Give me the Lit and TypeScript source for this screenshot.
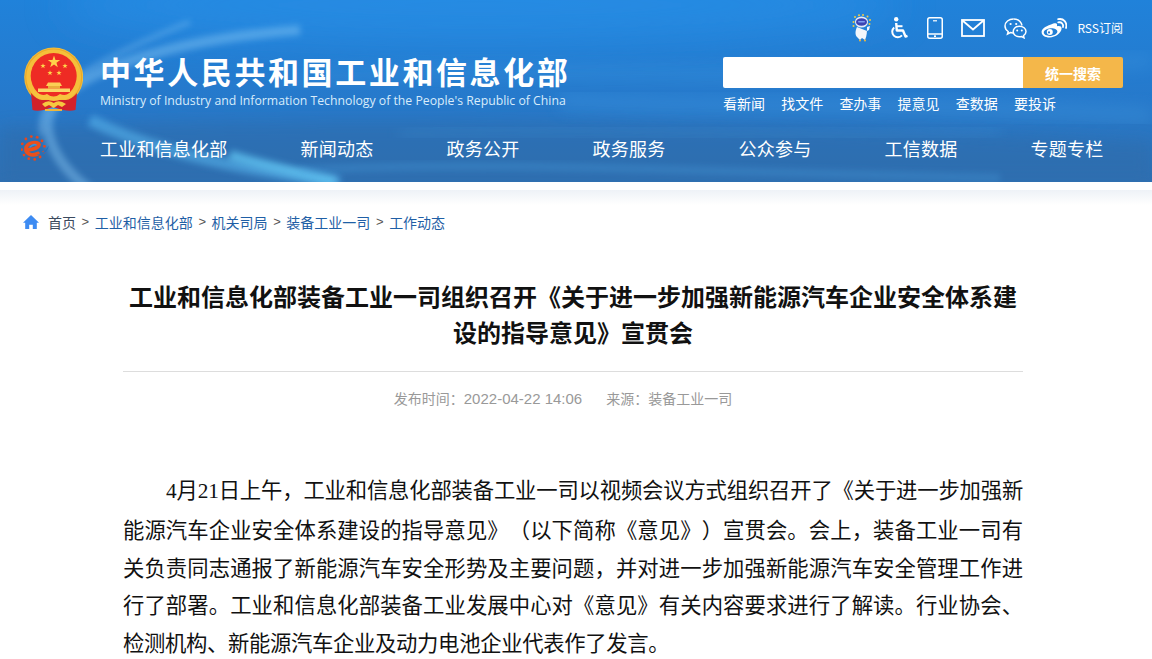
import { LitElement, html, css, svg } from "lit";
import { customElement } from "lit/decorators.js";

const NAV = ["工业和信息化部", "新闻动态", "政务公开", "政务服务", "公众参与", "工信数据", "专题专栏"];
const QUICK = ["看新闻", "找文件", "查办事", "提意见", "查数据", "要投诉"];
const CRUMBS = ["工业和信息化部", "机关司局", "装备工业一司", "工作动态"];

const star = (cx: number, cy: number, r: number) => {
  const pts: string[] = [];
  for (let i = 0; i < 10; i++) {
    const rad = i % 2 === 0 ? r : r * 0.4;
    const a = -Math.PI / 2 + (i * Math.PI) / 5;
    pts.push(`${(cx + rad * Math.cos(a)).toFixed(2)},${(cy + rad * Math.sin(a)).toFixed(2)}`);
  }
  return svg`<polygon points=${pts.join(" ")} fill="#ffd34a" />`;
};

const emblem = html`<svg class="emblem" viewBox="0 0 60 64" aria-hidden="true">
  <circle cx="30.7" cy="30" r="29.5" fill="#f5bf3a" />
  <circle cx="30.7" cy="30" r="28" fill="none" stroke="#eaa92b" stroke-width="1.2" />
  <circle cx="30.7" cy="29" r="23" fill="#ee2b24" />
  ${star(31, 15, 6.5)} ${star(20, 19, 2.8)} ${star(42, 19, 2.8)} ${star(27, 26, 2.8)} ${star(36, 26, 2.8)}
  <path d="M23 39 L25 35.5 L37 35.5 L39 39 Z" fill="#fbcf55" />
  <rect x="25" y="39" width="12" height="2.5" fill="#e9ad3a" />
  <rect x="15" y="41.5" width="32" height="3.5" fill="#fbd566" />
  <path d="M8 46 L9.5 63 Q14 64.5 21 63 L30 60 L40 63 Q47 64.5 52.5 63 L54 46 Q48 53 43 53 L19 53 Q14 53 8 46 Z" fill="#d3212b" />
  <path d="M10 43 Q18 50 24 47 Q30.7 52 37 47 Q44 50 52 43 L52 46 Q44 54 39 52 Q30.7 56 23 52 Q16 54 10 46 Z" fill="#f7c33f" />
  <path d="M19 57 Q25 52 30.7 56 Q36 52 43 57 L39 60 L35 58 L30.7 61 L26 58 L22 60 Z" fill="#f7c840" />
  <path d="M22 62 L39 62 L39 64 L22 64 Z" fill="#efb73c" />
</svg>`;

const navLogo = html`<svg class="navlogo" viewBox="0 0 28 26" fill="none" aria-hidden="true">
  <g fill="#e8471c">
    ${[0, 1, 2, 3, 4, 5, 6, 7, 8, 9, 10, 11].map((i) => {
      const a = (i * Math.PI) / 6 + 0.9;
      return svg`<circle cx=${(12 + 11.5 * Math.cos(a)).toFixed(1)} cy=${(13 + 11.5 * Math.sin(a)).toFixed(1)} r="1.4" />`;
    })}
  </g>
  <path d="M7 14.5 C12 15 18 12.5 18 9.5 C17 6.5 6 6.5 5 13.5 C4.5 19 11 21.5 17 18.5" stroke="#ea501c" stroke-width="3.8" stroke-linecap="round" />
  <path d="M9 12 C11 10 14 9 15 10" stroke="#3f90d4" stroke-width="1.6" stroke-linecap="round" />
  <path d="M15.5 19.5 C21 19 25.5 15 27.5 10.5 C27.8 15.5 22 21 15.5 19.5 Z" fill="#1f72c4" />
</svg>`;

const robot = html`<svg class="ic" width="20" height="28" viewBox="0 0 20 28" aria-hidden="true">
  <g fill="#f1c945"><circle cx="3" cy="3" r="1" /><circle cx="7" cy="1.2" r="1" /><circle cx="11" cy="1" r="1" /><circle cx="15.5" cy="2.5" r="1" /><circle cx="1.5" cy="8" r="1" /><circle cx="18" cy="6" r="1" /><circle cx="17.5" cy="10" r="1" /><circle cx="1.5" cy="12" r="1" /></g>
  <path d="M5 13 C3 17 3 21 5 23 L8 26 L10 24 L13 26 C15 22 15 17 15 13 L18 12 L17 16 L15 17 Z" fill="#f2f6fb" />
  <ellipse cx="9.5" cy="8" rx="6.5" ry="5.5" fill="#e8eef8" />
  <ellipse cx="9.5" cy="8" rx="5.5" ry="3.8" fill="#3b45b5" />
  <rect x="6" y="7" width="7" height="1.6" rx=".8" fill="#7d9cf0" />
  <circle cx="8" cy="26.6" r="1" fill="#efb73a" /><circle cx="13" cy="26.6" r="1" fill="#efb73a" />
</svg>`;

const wheelchair = html`<svg class="ic" width="18" height="23" viewBox="0 0 18 23" fill="none" aria-hidden="true">
  <circle cx="6.2" cy="2.2" r="2.2" fill="#fff" />
  <path d="M6.2 6 L6.8 13.5 L13 13.5 L15.5 19.5 L17.5 18.8" stroke="#fff" stroke-width="2.4" stroke-linejoin="round" />
  <path d="M6.8 9.2 L12.5 9.2" stroke="#fff" stroke-width="2" />
  <path d="M4.2 10.4 A5.6 5.6 0 1 0 12 18.4" stroke="#fff" stroke-width="2" />
</svg>`;

const phone = html`<svg class="ic" width="16" height="22" viewBox="0 0 16 22" fill="none" aria-hidden="true">
  <rect x=".75" y=".75" width="14.5" height="20.5" rx="2" stroke="#fff" stroke-width="1.5" />
  <path d="M1 17 H15" stroke="#fff" stroke-width="1.5" />
  <rect x="6" y="3.2" width="4" height="1.2" fill="#fff" />
  <rect x="7" y="18.4" width="2" height="1.6" fill="#fff" />
</svg>`;

const mail = html`<svg class="ic" width="24" height="18" viewBox="0 0 24 18" fill="none" aria-hidden="true">
  <rect x="1" y="1" width="22" height="16" stroke="#fff" stroke-width="1.8" />
  <path d="M1.5 1.5 L12 10.5 L22.5 1.5" stroke="#fff" stroke-width="1.8" />
</svg>`;

const wechat = html`<svg class="ic" width="23" height="21" viewBox="0 0 23 21" fill="none" aria-hidden="true">
  <path d="M9.5 1 C4.8 1 1 4.1 1 8 C1 10.3 2.3 12.2 4.2 13.5 L3.5 16 L6.4 14.5 C7.3 14.8 8.2 14.9 9 14.9" stroke="#fff" stroke-width="1.5" />
  <path d="M18 7.5 C17 3.6 13.6 1 9.5 1" stroke="#fff" stroke-width="1.5" />
  <circle cx="6.6" cy="6" r="1.1" fill="#fff" /><circle cx="12.2" cy="6" r="1.1" fill="#fff" />
  <path d="M15.5 8.2 C11.9 8.2 9.2 10.6 9.2 13.5 C9.2 16.4 11.9 18.8 15.5 18.8 C16.2 18.8 16.9 18.7 17.6 18.5 L20 19.8 L19.5 17.6 C21 16.6 22 15.1 22 13.5 C22 10.6 19.1 8.2 15.5 8.2 Z" stroke="#fff" stroke-width="1.5" />
  <circle cx="13.2" cy="12.6" r="1" fill="#fff" /><circle cx="17.8" cy="12.6" r="1" fill="#fff" />
</svg>`;

const weibo = html`<svg class="ic" width="26" height="21" viewBox="0 0 26 21" fill="none" aria-hidden="true">
  <path fill-rule="evenodd" clip-rule="evenodd" d="M10 6.5 C13 4.8 15.5 4.7 16 6.2 C16.3 7.2 15.8 8 16 8.3 C18.5 7.6 20.6 8.3 20.6 10.3 C20.6 14.6 14.8 19.5 8.5 19.5 C4 19.5 .6 17.4 .6 14 C.6 11.6 3.6 8.4 10 6.5 Z M9.7 10.2 C5.8 10.4 2.8 12.4 2.8 14.6 C2.8 16.7 5.8 18.1 9.5 17.9 C13.3 17.7 16.4 15.8 16.4 13.6 C16.4 11.5 13.4 10 9.7 10.2 Z" fill="#fff" />
  <circle cx="8.8" cy="14" r="3" fill="#fff" /><circle cx="8" cy="14.4" r="1.1" fill="#2a7bd0" />
  <path d="M17.2 4.4 C20.5 3.6 22.7 6 22 9" stroke="#fff" stroke-width="1.8" stroke-linecap="round" />
  <path d="M17.2 1.2 C22.5 0 26.6 4.5 25 10" stroke="#fff" stroke-width="1.8" stroke-linecap="round" />
</svg>`;

const home = html`<svg class="home" viewBox="0 0 16 14" aria-hidden="true">
  <path d="M8 0 L16 7.8 L13.8 7.8 L13.8 14 L9.8 14 L9.8 9.8 L6.2 9.8 L6.2 14 L2.2 14 L2.2 7.8 L0 7.8 Z" fill="#3d8bf2" />
</svg>`;

const headerArt = html`<svg class="art" viewBox="0 0 1152 182" preserveAspectRatio="none" aria-hidden="true">
  <defs>
    <filter id="b8" x="-20%" y="-50%" width="140%" height="200%"><feGaussianBlur stdDeviation="8" /></filter>
    <filter id="b3" x="-20%" y="-50%" width="140%" height="200%"><feGaussianBlur stdDeviation="3" /></filter>
    <filter id="b20" x="-20%" y="-80%" width="140%" height="260%"><feGaussianBlur stdDeviation="20" /></filter>
  </defs>
  <ellipse cx="480" cy="5" rx="420" ry="38" fill="#2a93ea" opacity=".55" filter="url(#b20)" />
  <path d="M0 182 V128 C300 118 700 120 1152 142 V182 Z" fill="#2f6cab" opacity=".55" filter="url(#b8)" />
  <path d="M300 30 C160 40 40 80 48 130 C52 155 70 175 90 190" fill="none" stroke="#8fcdf7" stroke-width="10" opacity=".42" filter="url(#b3)" />
  <path d="M190 22 C120 50 30 90 42 135" fill="none" stroke="#a3d8fa" stroke-width="5" opacity=".3" filter="url(#b3)" />
  <path d="M90 120 C150 150 240 170 340 182" fill="none" stroke="#5ab8ef" stroke-width="12" opacity=".55" filter="url(#b3)" />
  <path d="M230 155 C260 165 300 172 335 182" fill="none" stroke="#63c8f4" stroke-width="10" opacity=".7" filter="url(#b3)" />
  <path d="M280 80 C500 60 800 90 1152 60" fill="none" stroke="#4aa2e6" stroke-width="14" opacity=".25" filter="url(#b8)" />
  <path d="M560 100 C700 110 900 100 1152 116" fill="none" stroke="#3c96e0" stroke-width="16" opacity=".4" filter="url(#b8)" />
  <path d="M300 170 C500 160 700 172 1000 178" fill="none" stroke="#4a9fdd" stroke-width="8" opacity=".3" filter="url(#b3)" />
  <path d="M400 135 C600 120 800 145 1000 130" fill="none" stroke="#4ea3e3" stroke-width="10" opacity=".2" filter="url(#b8)" />
</svg>`;

@customElement("app-root")
export class AppRoot extends LitElement {
  static styles = css`
    :host {
      display: block;
      width: 100%;
      height: 659px;
      overflow: hidden;
      background: #fff;
      font-family: "Noto Sans CJK SC", "Liberation Sans", sans-serif;
      text-autospace: no-autospace;
    }
    .head {
      position: relative;
      height: 182px;
      background: linear-gradient(180deg, #2082da 0%, #2679cb 55%, #2f70b2 100%);
      color: #fff;
      overflow: hidden;
    }
    .art { position: absolute; inset: 0; width: 100%; height: 100%; }
    .inner { position: relative; display: flex; flex-direction: column; height: 100%; }
    .top {
      display: flex;
      justify-content: space-between;
      height: 124px;
      padding: 0 29px 0 23px;
      box-sizing: border-box;
    }
    .brand { display: flex; gap: 17px; padding-top: 47px; }
    .emblem { width: 60px; height: 64px; flex: none; }
    .names { padding-top: 4px; }
    .cn {
      font-size: 31px;
      line-height: 40px;
      font-weight: 700;
      letter-spacing: 2.6px;
      white-space: nowrap;
    }
    .en {
      font-family: "Open Sans", "Liberation Sans", sans-serif;
      font-size: 12.25px;
      line-height: 16px;
      margin-top: 2px;
      color: #d8ecfb;
      white-space: nowrap;
    }
    .right { width: 400px; display: flex; flex-direction: column; }
    .tools {
      display: flex;
      align-items: center;
      justify-content: flex-end;
      gap: 18.5px;
      height: 28px;
      margin-top: 14px;
    }
    .ic { display: block; flex: none; }
    .tail { display: flex; align-items: center; gap: 10px; margin-left: -4px; }
    .rss { font-size: 12px; line-height: 16px; white-space: nowrap; }
    .search { display: flex; height: 31px; margin-top: 15px; border-radius: 2px; overflow: hidden; }
    .box { flex: 1; background: #fff; }
    .go {
      width: 100px;
      display: flex;
      align-items: center;
      justify-content: center;
      background: #f4b74a;
      font-size: 14px;
      font-weight: 700;
      color: #fff;
    }
    .quick { display: flex; gap: 16.2px; margin-top: 5px; font-size: 14px; line-height: 20px; }
    .nav {
      display: flex;
      align-items: center;
      height: 48px;
      padding-left: 21px;
    }
    .navlogo { width: 28px; height: 26px; flex: none; margin-right: 51px; }
    .items { display: flex; gap: 73.2px; font-size: 18px; letter-spacing: .2px; line-height: 26px; }
    .shadow {
      height: 15px;
      margin-top: 8px;
      background: linear-gradient(180deg, #eef2f7 0%, #fff 100%);
    }
    .crumb {
      display: flex;
      align-items: center;
      height: 20px;
      margin-top: 7px;
      padding-left: 23px;
      font-size: 14px;
      line-height: 20px;
      color: #1f5fa6;
    }
    .home { width: 16px; height: 14px; flex: none; margin-right: 9px; }
    .first { color: #3b4a5e; }
    .sep { color: #555; margin: 0 5.6px; font-family: "Liberation Sans", sans-serif; font-size: 13px; }
    .main { width: 900px; margin-left: 123px; }
    h1 {
      margin: 46px 0 0;
      font-size: 24px;
      line-height: 36px;
      font-weight: 700;
      color: #111;
      text-align: center;
    }
    .meta {
      margin-top: 21px;
      border-top: 1px solid #ddd;
      padding: 16px 20px 0 0;
      display: flex;
      justify-content: center;
      gap: 24px;
      font-size: 14px;
      line-height: 20px;
      color: #999;
    }
    .stamp { font-family: "Liberation Sans", sans-serif; font-size: 15px; }
    .body {
      margin: 61px 0 0;
      font-size: 21.33px;
      line-height: 37.4px;
      color: #111;
      text-spacing-trim: space-all;
    }
    .line { display: block; white-space: nowrap; text-align: justify; text-align-last: justify; }
    .lead { text-indent: 43px; letter-spacing: -0.16px; }
    .end { text-align-last: left; letter-spacing: -0.32px; }
    .num { font-family: "Liberation Serif", serif; }
  `;

  render() {
    return html`
      <header class="head">
        ${headerArt}
        <div class="inner">
          <div class="top">
            <div class="brand">
              ${emblem}
              <div class="names">
                <div class="cn">中华人民共和国工业和信息化部</div>
                <div class="en">Ministry of Industry and Information Technology of the People's Republic of China</div>
              </div>
            </div>
            <div class="right">
              <div class="tools">
                ${robot}${wheelchair}${phone}${mail}${wechat}
                <div class="tail">${weibo}<span class="rss">RSS订阅</span></div>
              </div>
              <div class="search">
                <div class="box"></div>
                <div class="go">统一搜索</div>
              </div>
              <div class="quick">${QUICK.map((q) => html`<span>${q}</span>`)}</div>
            </div>
          </div>
          <nav class="nav">
            ${navLogo}
            <div class="items">${NAV.map((n) => html`<span>${n}</span>`)}</div>
          </nav>
        </div>
      </header>
      <div class="shadow"></div>
      <div class="crumb">
        ${home}<span class="first">首页</span>
        ${CRUMBS.map((c) => html`<span class="sep">&gt;</span><span>${c}</span>`)}
      </div>
      <main class="main">
        <h1>工业和信息化部装备工业一司组织召开《关于进一步加强新能源汽车企业安全体系建设的指导意见》宣贯会</h1>
        <div class="meta">
          <span>发布时间：<span class="stamp">2022-04-22 14:06</span></span>
          <span>来源：装备工业一司</span>
        </div>
        <div class="body">
          <span class="line lead"><span class="num">4</span>月<span class="num">21</span>日上午，工业和信息化部装备工业一司以视频会议方式组织召开了《关于进一步加强新</span>
          <span class="line">能源汽车企业安全体系建设的指导意见》（以下简称《意见》）宣贯会。会上，装备工业一司有</span>
          <span class="line">关负责同志通报了新能源汽车安全形势及主要问题，并对进一步加强新能源汽车安全管理工作进</span>
          <span class="line">行了部署。工业和信息化部装备工业发展中心对《意见》有关内容要求进行了解读。行业协会、</span>
          <span class="line end">检测机构、新能源汽车企业及动力电池企业代表作了发言。</span>
        </div>
      </main>
    `;
  }
}
